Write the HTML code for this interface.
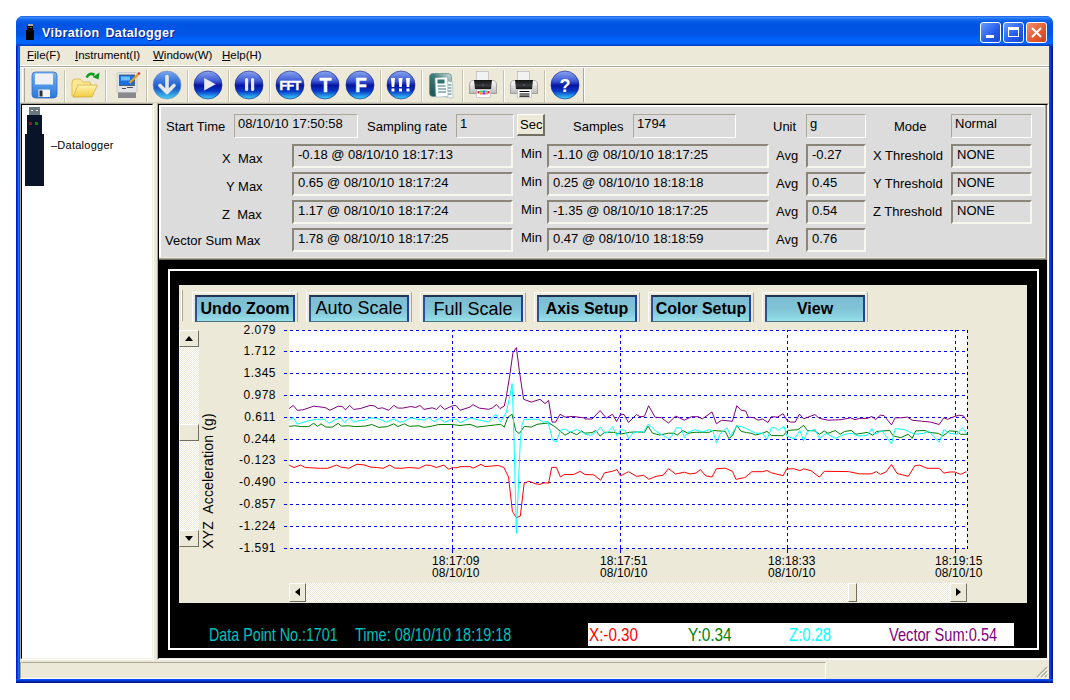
<!DOCTYPE html>
<html><head><meta charset="utf-8">
<style>
*{margin:0;padding:0;box-sizing:border-box}
html,body{width:1070px;height:700px;overflow:hidden;background:#fff}
body{position:relative;font-family:"Liberation Sans",sans-serif;color:#000}
.a{position:absolute}
.t13{font-size:13px;line-height:15px;white-space:pre}
.t12{font-size:12px;line-height:14px;white-space:pre}
.t11{font-size:12px;line-height:12px;white-space:pre;letter-spacing:0.5px}
.xl{letter-spacing:0.1px;font-size:12px;line-height:12px}
.box{position:absolute;background:#dcdcdc;border-top:2px solid #8a877a;border-left:2px solid #8a877a;border-bottom:2px solid #f8f7f0;border-right:2px solid #f8f7f0;font-size:13px;line-height:15px;padding:1px 0 0 4px;white-space:pre}
.box1{position:absolute;background:#dcdcdc;border-top:1px solid #aca899;border-left:1px solid #aca899;border-bottom:1px solid #fff;border-right:1px solid #fff;font-size:13px;line-height:15px;padding:1px 0 0 3px;white-space:pre}
.sep{position:absolute;top:70px;width:2px;height:30px;border-left:1px solid #c5c2b2;border-right:1px solid #fff}
.btn{position:absolute;height:27px;width:100px;border-top:2px solid #1e3450;border-left:2px solid #2c4f9c;border-right:2px solid #20409a;border-bottom:1px solid #4a7080;background:linear-gradient(#7cbcd2 0%,#80c4d6 50%,#8cd2e0 80%,#98e2ec 100%);font-size:16px;font-weight:bold;text-align:center;line-height:23px;white-space:pre;color:#000}
.bfr{position:absolute;height:30px;width:106px;border-top:1px solid #fff;border-left:1px solid #fff;border-right:1px solid #aca899}
</style></head><body>

<!-- window frame -->
<div class="a" style="left:16px;top:16px;width:1037px;height:667px;background:#0a4ee8;border-radius:7px 7px 0 0"></div>
<div class="a" style="left:16px;top:40px;width:1px;height:643px;background:#0020d0"></div>
<div class="a" style="left:17px;top:40px;width:1px;height:643px;background:#0838e0"></div>
<div class="a" style="left:18px;top:40px;width:1px;height:643px;background:#1a6cf0"></div>
<div class="a" style="left:19px;top:40px;width:1px;height:643px;background:#0a50e8"></div>
<div class="a" style="left:1049px;top:40px;width:1px;height:643px;background:#0a4af8"></div>
<div class="a" style="left:1050px;top:40px;width:1px;height:643px;background:#0040d8"></div>
<div class="a" style="left:1051px;top:40px;width:1px;height:643px;background:#0028b0"></div>
<div class="a" style="left:1052px;top:40px;width:1px;height:643px;background:#001490"></div>
<div class="a" style="left:16px;top:679px;width:1037px;height:1px;background:#0a4af8"></div>
<div class="a" style="left:16px;top:680px;width:1037px;height:1px;background:#0040d8"></div>
<div class="a" style="left:16px;top:681px;width:1037px;height:1px;background:#0028b0"></div>
<div class="a" style="left:16px;top:682px;width:1037px;height:1px;background:#001490"></div>
<!-- title bar -->
<div class="a" style="left:16px;top:16px;width:1037px;height:30px;border-radius:7px 7px 0 0;background:linear-gradient(#0a46d8 0px,#3d8dff 1px,#3283fb 2px,#1a6ff0 3px,#0b5fe8 5px,#0054e3 8px,#0055e5 18px,#0060f5 22px,#0066ff 27px,#005cf0 28px,#0041c6 29px)"></div>
<!-- title icon -->
<div class="a" style="left:28px;top:24px;width:5px;height:2px;background:#a8a8a8"></div>
<div class="a" style="left:27px;top:26px;width:6px;height:5px;background:#000"></div>
<div class="a" style="left:28px;top:27px;width:1px;height:1px;background:#b00000"></div>
<div class="a" style="left:30px;top:27px;width:2px;height:1px;background:#00b000"></div>
<div class="a" style="left:26px;top:30px;width:8px;height:10px;background:#000"></div>
<div class="a" style="left:42px;top:26px;font-size:12.5px;line-height:15px;font-weight:bold;color:#fff;letter-spacing:0.4px;word-spacing:2px;text-shadow:1px 1px 0 #0a1e8c;white-space:pre">Vibration Datalogger</div>
<!-- title buttons -->
<div class="a" style="left:980px;top:22px;width:21px;height:21px;border:1px solid #fff;border-radius:3px;background:linear-gradient(135deg,#6a9cff,#225aeb 60%,#1a49d0)"></div>
<div class="a" style="left:986px;top:35px;width:8px;height:3px;background:#fff"></div>
<div class="a" style="left:1003px;top:22px;width:21px;height:21px;border:1px solid #fff;border-radius:3px;background:linear-gradient(135deg,#6a9cff,#225aeb 60%,#1a49d0)"></div>
<div class="a" style="left:1008px;top:27px;width:11px;height:10px;border:1px solid #fff;border-top:3px solid #fff"></div>
<div class="a" style="left:1026px;top:22px;width:21px;height:21px;border:1px solid #fff;border-radius:3px;background:linear-gradient(135deg,#f0906a,#e35a2e 60%,#c8401c)"></div>
<svg class="a" style="left:1026px;top:22px" width="21" height="21"><path d="M6 6 L15 15 M15 6 L6 15" stroke="#fff" stroke-width="2"/></svg>

<!-- client -->
<div class="a" style="left:20px;top:46px;width:1029px;height:633px;background:#ece9d8"></div>
<!-- menu -->
<div class="a" style="left:20px;top:65px;width:1029px;height:1px;background:#fff"></div>
<div class="a" style="left:20px;top:66px;width:1029px;height:1px;background:#aca899"></div>
<div class="a" style="left:20px;top:67px;width:1029px;height:1px;background:#fff"></div>
<div class="a t12" style="left:27px;top:48px;font-size:11.5px"><u>F</u>ile(F)</div>
<div class="a t12" style="left:75px;top:48px;font-size:11.5px"><u>I</u>nstrument(I)</div>
<div class="a t12" style="left:153px;top:48px;font-size:11.5px"><u>W</u>indow(W)</div>
<div class="a t12" style="left:222px;top:48px;font-size:11.5px"><u>H</u>elp(H)</div>

<!-- toolbar -->
<div class="a" style="left:22px;top:68px;width:1px;height:34px;background:#fff"></div>
<div class="a" style="left:24px;top:68px;width:1px;height:34px;background:#aca899"></div>
<div class="a" style="left:583px;top:68px;width:1px;height:35px;background:#aca899"></div><div class="a" style="left:584px;top:68px;width:1px;height:35px;background:#fff"></div>
<div class="a" style="left:20px;top:102px;width:565px;height:1px;background:#d8d4c4"></div>
<svg class="a" style="left:0;top:0" width="600" height="104" viewBox="0 0 600 104">
<defs>
<linearGradient id="gb" x1="0" y1="0" x2="0" y2="1">
<stop offset="0" stop-color="#8aa6ee"/><stop offset="0.35" stop-color="#3f5cd6"/><stop offset="0.52" stop-color="#0614a4"/><stop offset="0.72" stop-color="#0838c8"/><stop offset="1" stop-color="#3ad6ff"/>
</linearGradient>
<linearGradient id="gd" x1="0" y1="0" x2="0" y2="1">
<stop offset="0" stop-color="#7aa8ec"/><stop offset="0.45" stop-color="#2a6ad8"/><stop offset="0.6" stop-color="#1858c8"/><stop offset="1" stop-color="#48d0f4"/>
</linearGradient>
<linearGradient id="gf" x1="0" y1="0" x2="0" y2="1">
<stop offset="0" stop-color="#74b4f4"/><stop offset="1" stop-color="#2a78d8"/>
</linearGradient>
<linearGradient id="gy" x1="0" y1="0" x2="0" y2="1">
<stop offset="0" stop-color="#fff4b0"/><stop offset="1" stop-color="#f0cc40"/>
</linearGradient>
<linearGradient id="gt" x1="0" y1="0" x2="1" y2="1">
<stop offset="0" stop-color="#a8c8c0"/><stop offset="0.5" stop-color="#2a6e6a"/><stop offset="1" stop-color="#1a4a48"/>
</linearGradient>
</defs>
<!-- separators -->
<g stroke-width="1">
<path d="M64.5 70V102 M105.5 70V102 M146.5 70V102 M187.5 70V102 M228.5 70V102 M269.5 70V102 M380.5 70V102 M421.5 70V102 M462.5 70V102 M503.5 70V102 M544.5 70V102" stroke="#c5c2b2"/>
<path d="M65.5 70V102 M106.5 70V102 M147.5 70V102 M188.5 70V102 M229.5 70V102 M270.5 70V102 M381.5 70V102 M422.5 70V102 M463.5 70V102 M504.5 70V102 M545.5 70V102" stroke="#fff"/>
</g>
<!-- floppy -->
<rect x="32" y="72" width="25" height="26" rx="3.5" fill="url(#gf)" stroke="#3a6cc0" stroke-width="0.8"/>
<rect x="35" y="73.5" width="18" height="11" fill="#eef0f4"/>
<rect x="38.5" y="89.5" width="11.5" height="7.5" fill="#f4f4f4"/>
<rect x="39.5" y="90.5" width="3" height="6" fill="#303030"/>
<!-- folder -->
<path d="M72 83 Q72 79 75 79 L80 79 L83 82 L90 82 L91 86 L72 96 Z" fill="#fbe890" stroke="#d8b040" stroke-width="0.7"/>
<path d="M73 97 L78 85 L97.5 85 L92 97 Z" fill="url(#gy)" stroke="#d0a838" stroke-width="0.7"/>
<path d="M86.5 77.5 Q89.5 72 94.5 74.8" fill="none" stroke="#109a20" stroke-width="2.6"/>
<path d="M92.5 77 L99.5 72.5 L98.5 79.5 Z" fill="#109a20"/>
<!-- computer -->
<rect x="117" y="72.5" width="20" height="20" rx="1.5" fill="#e4e4e6" stroke="#b8b8bc" stroke-width="0.6"/>
<rect x="119.5" y="75" width="15" height="10.5" fill="#1a70e0" stroke="#404c60" stroke-width="0.8"/>
<rect x="121" y="76.5" width="9" height="4" fill="#6ac0ff"/>
<rect x="118" y="92.5" width="18" height="5.5" fill="#8a8a8e"/>
<path d="M122 88.5h4 M127 87.5h6" stroke="#505050" stroke-width="1"/>
<path d="M129.5 83 L138.5 74" stroke="#e8a020" stroke-width="2.2"/>
<circle cx="139" cy="73.5" r="1.3" fill="#e03030"/>
<!-- circles -->
<circle cx="167" cy="85" r="14" fill="url(#gd)" stroke="#7a90b8" stroke-width="0.6"/>
<path d="M167 76.5 V92 M160 85.5 L167 92.5 L174 85.5" fill="none" stroke="#e6e6e6" stroke-width="3.6" stroke-linecap="round" stroke-linejoin="round"/>
<circle cx="208" cy="85" r="14" fill="url(#gb)" stroke="#14207a" stroke-width="0.6"/>
<path d="M204.2 77.9 L204.2 90.5 L215.7 84.2 Z" fill="#e8e8f0"/>
<circle cx="249" cy="85" r="14" fill="url(#gb)" stroke="#14207a" stroke-width="0.6"/>
<rect x="245" y="78" width="3.2" height="13" rx="1.6" fill="#e8e8f0"/>
<rect x="251" y="78" width="3.2" height="13" rx="1.6" fill="#e8e8f0"/>
<circle cx="290" cy="85" r="14" fill="url(#gb)" stroke="#14207a" stroke-width="0.6"/>
<text x="290" y="89.5" font-family="Liberation Sans" font-weight="bold" font-size="12.5" fill="#fff" stroke="#fff" stroke-width="0.5" text-anchor="middle" letter-spacing="-0.6">FFT</text>
<circle cx="325" cy="85" r="14" fill="url(#gb)" stroke="#14207a" stroke-width="0.6"/>
<text x="325.5" y="91.5" font-family="Liberation Sans" font-weight="bold" font-size="19.5" fill="#fff" stroke="#fff" stroke-width="0.4" text-anchor="middle">T</text>
<circle cx="360" cy="85" r="14" fill="url(#gb)" stroke="#14207a" stroke-width="0.6"/>
<text x="361" y="91.5" font-family="Liberation Sans" font-weight="bold" font-size="19.5" fill="#fff" stroke="#fff" stroke-width="0.4" text-anchor="middle">F</text>
<circle cx="401" cy="85" r="14" fill="url(#gb)" stroke="#14207a" stroke-width="0.6"/>
<g fill="#fff"><path d="M391 78h4l-0.7 9h-2.6z M398.5 78h4l-0.7 9h-2.6z M406 78h4l-0.7 9h-2.6z"/><rect x="391.5" y="88.5" width="3" height="3"/><rect x="399" y="88.5" width="3" height="3"/><rect x="406.5" y="88.5" width="3" height="3"/></g>
<circle cx="565" cy="85" r="14" fill="url(#gb)" stroke="#14207a" stroke-width="0.6"/>
<text x="565" y="91.5" font-family="Liberation Sans" font-weight="bold" font-size="18" fill="#fff" text-anchor="middle">?</text>
<!-- report -->
<linearGradient id="gr" x1="0" y1="1" x2="1" y2="0"><stop offset="0" stop-color="#164e4c"/><stop offset="0.55" stop-color="#3f7c78"/><stop offset="1" stop-color="#d4e4e2"/></linearGradient>
<rect x="429.5" y="73.5" width="22" height="23" rx="3.5" fill="url(#gr)" stroke="#6a9290" stroke-width="0.8"/>
<path d="M446 81 L452.5 82 L453 98 L446 97.5 Z" fill="#f6fafa" stroke="#9ab0b0" stroke-width="0.6"/>
<path d="M447.5 85h4 M447.5 88h4 M447.5 91h4 M447.5 94h4" stroke="#3a7a78" stroke-width="1"/>
<path d="M435 78 L447.5 77 L448 96.5 L436 97.2 Z" fill="#fff" stroke="#9ab0b0" stroke-width="0.6"/>
<rect x="437.5" y="79.5" width="7" height="4" fill="#2d7370"/>
<path d="M437.5 86h8 M438 89h8 M438 92h8" stroke="#3a7a78" stroke-width="1.1"/>
<!-- printer 1 -->
<linearGradient id="gp" x1="0" y1="0" x2="0" y2="1"><stop offset="0" stop-color="#ffffff"/><stop offset="1" stop-color="#b8b8b8"/></linearGradient>
<linearGradient id="gk" x1="0" y1="0" x2="0" y2="1"><stop offset="0" stop-color="#101010"/><stop offset="0.6" stop-color="#3a3a3a"/><stop offset="1" stop-color="#151515"/></linearGradient>
<rect x="476.5" y="71.5" width="12" height="9" fill="#f2f2f2" stroke="#b0b0b0" stroke-width="0.6"/>
<path d="M469.5 85 Q469.5 80.5 473.5 80.5 L492.5 80.5 Q496.5 80.5 496.5 85 L496.5 93.5 L469.5 93.5 Z" fill="url(#gp)" stroke="#8a8a8a" stroke-width="0.7"/>
<path d="M474 80 L492 80 L491 89 L475 89 Z" fill="url(#gk)"/>
<circle cx="483" cy="85" r="0.7" fill="#5080ff"/>
<rect x="476.5" y="89.5" width="14" height="8" fill="#fff" stroke="#a8a8a8" stroke-width="0.5"/>
<rect x="477.5" y="91" width="2" height="2.5" fill="#ff1060"/><rect x="480" y="90.5" width="2.5" height="2" fill="#40e020"/><rect x="480" y="92.5" width="2.5" height="2" fill="#ff9000"/><rect x="482.5" y="90.5" width="2.5" height="2" fill="#2080ff"/><rect x="482.5" y="92.5" width="2.5" height="2" fill="#a020ff"/><rect x="485" y="90.5" width="2.5" height="2" fill="#40e020"/><rect x="485" y="92.5" width="2.5" height="2" fill="#ff9000"/><rect x="487.5" y="91" width="2" height="2.5" fill="#ff1060"/>
<!-- printer 2 -->
<rect x="517.5" y="71.5" width="12" height="9" fill="#f2f2f2" stroke="#b0b0b0" stroke-width="0.6"/>
<path d="M510.5 85 Q510.5 80.5 514.5 80.5 L533.5 80.5 Q537.5 80.5 537.5 85 L537.5 93.5 L510.5 93.5 Z" fill="url(#gp)" stroke="#8a8a8a" stroke-width="0.7"/>
<path d="M515 80 L533 80 L532 89 L516 89 Z" fill="url(#gk)"/>
<circle cx="524" cy="85" r="0.7" fill="#5080ff"/>
<rect x="517.5" y="89.5" width="14" height="8" fill="#fff" stroke="#a8a8a8" stroke-width="0.5"/>
<path d="M519.5 91.5h10 M519.5 94h10 M519.5 96.2h10" stroke="#000" stroke-width="1.2"/>
</svg>


<!-- tree panel -->
<div class="a" style="left:20px;top:103px;width:134px;height:557px;background:#fff;border-top:1px solid #aca899;border-left:1px solid #aca899;border-right:1px solid #fff;border-bottom:1px solid #fff"></div>
<div class="a" style="left:21px;top:104px;width:132px;height:555px;border-top:1px solid #000;border-left:1px solid #000;border-right:1px solid #f1efe2;border-bottom:1px solid #f1efe2"></div>
<!-- usb icon -->
<div class="a" style="left:29px;top:107px;width:11px;height:8px;background:#6c7880"></div>
<div class="a" style="left:31px;top:110px;width:2px;height:1px;background:#e8e8e8"></div>
<div class="a" style="left:36px;top:110px;width:2px;height:1px;background:#e8e8e8"></div>
<div class="a" style="left:27px;top:115px;width:15px;height:20px;background:#0a1428"></div>
<div class="a" style="left:29px;top:122px;width:3px;height:3px;background:#a01010"></div>
<div class="a" style="left:35px;top:122px;width:3px;height:3px;background:#108010"></div>
<div class="a" style="left:25px;top:134px;width:19px;height:52px;background:#0a1428"></div>
<div class="a t12" style="left:51px;top:138px;font-size:11px;letter-spacing:0.25px">–Datalogger</div>

<!-- info panel -->
<div class="a" style="left:157px;top:103px;width:892px;height:557px;border-top:1px solid #aca899;border-left:1px solid #aca899;border-right:1px solid #fff;border-bottom:1px solid #fff"></div>
<div class="a" style="left:158px;top:104px;width:890px;height:555px;border-top:1px solid #000;border-left:1px solid #000;border-right:1px solid #f1efe2;border-bottom:1px solid #f1efe2;background:#000"></div>
<div class="a" style="left:159px;top:105px;width:888px;height:155px;background:#716f64"></div>
<div class="a" style="left:159px;top:105px;width:887px;height:154px;background:#aca899"></div>
<div class="a" style="left:159px;top:105px;width:886px;height:153px;background:#ece9d8"></div>
<div class="a" style="left:159px;top:105px;width:885px;height:152px;background:#fff"></div>
<div class="a" style="left:161px;top:107px;width:883px;height:150px;background:#dcdcdc"></div>
<!--INFO-->
<div class="a t13" style="left:166px;top:119px">Start Time</div>
<div class="box1" style="left:234px;top:114px;width:124px;height:24px">08/10/10 17:50:58</div>
<div class="a t13" style="left:367px;top:119px">Sampling rate</div>
<div class="box1" style="left:456px;top:114px;width:58px;height:24px">1</div>
<div class="a" style="left:517px;top:114px;width:28px;height:22px;background:#ece9d8;border-top:1px solid #fff;border-left:1px solid #fff;border-right:2px solid #716f64;border-bottom:2px solid #716f64;font-size:13px;line-height:19px;padding-left:2px">Sec</div>
<div class="a t13" style="left:573px;top:119px">Samples</div>
<div class="box1" style="left:633px;top:114px;width:103px;height:24px">1794</div>
<div class="a t13" style="left:773px;top:119px">Unit</div>
<div class="box1" style="left:806px;top:114px;width:60px;height:24px">g</div>
<div class="a t13" style="left:894px;top:119px">Mode</div>
<div class="box1" style="left:951px;top:114px;width:81px;height:24px">Normal</div>

<div class="a t13" style="left:222px;top:151px">X  Max</div>
<div class="a t13" style="left:226px;top:179px">Y Max</div>
<div class="a t13" style="left:222px;top:207px">Z  Max</div>
<div class="a t13" style="left:165px;top:233px">Vector Sum Max</div>
<div class="box" style="left:292px;top:144px;width:221px;height:24px">-0.18 @ 08/10/10 18:17:13</div>
<div class="box" style="left:292px;top:172px;width:221px;height:24px">0.65 @ 08/10/10 18:17:24</div>
<div class="box" style="left:292px;top:200px;width:221px;height:24px">1.17 @ 08/10/10 18:17:24</div>
<div class="box" style="left:292px;top:228px;width:221px;height:24px">1.78 @ 08/10/10 18:17:25</div>
<div class="a t13" style="left:521px;top:146px">Min</div>
<div class="a t13" style="left:521px;top:174px">Min</div>
<div class="a t13" style="left:521px;top:202px">Min</div>
<div class="a t13" style="left:521px;top:230px">Min</div>
<div class="box" style="left:547px;top:144px;width:222px;height:24px">-1.10 @ 08/10/10 18:17:25</div>
<div class="box" style="left:547px;top:172px;width:222px;height:24px">0.25 @ 08/10/10 18:18:18</div>
<div class="box" style="left:547px;top:200px;width:222px;height:24px">-1.35 @ 08/10/10 18:17:25</div>
<div class="box" style="left:547px;top:228px;width:222px;height:24px">0.47 @ 08/10/10 18:18:59</div>
<div class="a t13" style="left:776px;top:148px">Avg</div>
<div class="a t13" style="left:776px;top:176px">Avg</div>
<div class="a t13" style="left:776px;top:204px">Avg</div>
<div class="a t13" style="left:776px;top:232px">Avg</div>
<div class="box" style="left:806px;top:144px;width:60px;height:24px">-0.27</div>
<div class="box" style="left:806px;top:172px;width:60px;height:24px">0.45</div>
<div class="box" style="left:806px;top:200px;width:60px;height:24px">0.54</div>
<div class="box" style="left:806px;top:228px;width:60px;height:24px">0.76</div>
<div class="a t13" style="left:873px;top:148px">X Threshold</div>
<div class="a t13" style="left:873px;top:176px">Y Threshold</div>
<div class="a t13" style="left:873px;top:204px">Z Threshold</div>
<div class="box" style="left:951px;top:144px;width:81px;height:24px">NONE</div>
<div class="box" style="left:951px;top:172px;width:81px;height:24px">NONE</div>
<div class="box" style="left:951px;top:200px;width:81px;height:24px">NONE</div>

<!-- chart black area -->
<div class="a" style="left:168px;top:269px;width:871px;height:381px;border:2px solid #fff"></div>
<!-- plot panel cream -->
<div class="a" style="left:179px;top:285px;width:848px;height:318px;background:#ece9d8"></div>
<div class="a" style="left:181px;top:290px;width:1px;height:31px;background:#fff"></div>
<div class="a" style="left:182px;top:290px;width:1px;height:31px;background:#aca899"></div>
<!--BUTTONS-->
<div class="bfr" style="left:192px;top:292px"></div>
<div class="btn" style="left:195px;top:295px">Undo Zoom</div>
<div class="bfr" style="left:306px;top:292px"></div>
<div class="btn" style="left:309px;top:295px;font-weight:normal;font-size:18px">Auto Scale</div>
<div class="bfr" style="left:420px;top:292px"></div>
<div class="btn" style="left:423px;top:295px;font-weight:normal;font-size:18px;line-height:25px">Full Scale</div>
<div class="bfr" style="left:534px;top:292px"></div>
<div class="btn" style="left:537px;top:295px">Axis Setup</div>
<div class="bfr" style="left:648px;top:292px"></div>
<div class="btn" style="left:651px;top:295px">Color Setup</div>
<div class="bfr" style="left:762px;top:292px"></div>
<div class="btn" style="left:765px;top:295px">View</div>

<!-- vertical scrollbar -->
<div class="a" style="left:179px;top:330px;width:20px;height:217px;background:repeating-conic-gradient(#fff 0 25%,#ece9d8 0 50%) 0 0/2px 2px"></div>
<div class="a" style="left:179px;top:330px;width:20px;height:17px;background:#ece9d8;border-top:1px solid #fff;border-left:1px solid #fff;border-right:1px solid #716f64;border-bottom:1px solid #716f64"></div>
<svg class="a" style="left:179px;top:330px" width="20" height="17"><path d="M6 11 L14 11 L10 6 Z" fill="#000"/></svg>
<div class="a" style="left:179px;top:424px;width:20px;height:17px;background:#ece9d8;border-top:1px solid #fff;border-left:1px solid #fff;border-right:1px solid #716f64;border-bottom:1px solid #716f64"></div>
<div class="a" style="left:179px;top:530px;width:20px;height:17px;background:#ece9d8;border-top:1px solid #fff;border-left:1px solid #fff;border-right:1px solid #716f64;border-bottom:1px solid #716f64"></div>
<svg class="a" style="left:179px;top:530px" width="20" height="17"><path d="M6 6 L14 6 L10 11 Z" fill="#000"/></svg>
<div class="a" style="left:138px;top:473px;width:140px;height:16px;font-size:14px;line-height:16px;letter-spacing:0.15px;white-space:pre;text-align:center;transform:rotate(-90deg);transform-origin:center">XYZ  Acceleration (g)</div>
<div class="a t11" style="right:794px;top:323.5px">2.079</div><div class="a t11" style="right:794px;top:345.3px">1.712</div><div class="a t11" style="right:794px;top:367.1px">1.345</div><div class="a t11" style="right:794px;top:388.9px">0.978</div><div class="a t11" style="right:794px;top:410.7px">0.611</div><div class="a t11" style="right:794px;top:432.5px">0.244</div><div class="a t11" style="right:794px;top:454.3px">-0.123</div><div class="a t11" style="right:794px;top:476.1px">-0.490</div><div class="a t11" style="right:794px;top:497.9px">-0.857</div><div class="a t11" style="right:794px;top:519.7px">-1.224</div><div class="a t11" style="right:794px;top:541.5px">-1.591</div>
<svg class="a" style="left:0;top:0" width="1070" height="700" viewBox="0 0 1070 700">
<rect x="289" y="330" width="678" height="219" fill="#fff"/>
<line x1="284" y1="330.5" x2="967" y2="330.5" stroke="#0000ff" stroke-width="1" stroke-dasharray="3 3"/><line x1="284" y1="351.5" x2="967" y2="351.5" stroke="#0000ff" stroke-width="1" stroke-dasharray="3 3"/><line x1="284" y1="373.5" x2="967" y2="373.5" stroke="#0000ff" stroke-width="1" stroke-dasharray="3 3"/><line x1="284" y1="395.5" x2="967" y2="395.5" stroke="#0000ff" stroke-width="1" stroke-dasharray="3 3"/><line x1="284" y1="417.5" x2="967" y2="417.5" stroke="#0000ff" stroke-width="1" stroke-dasharray="3 3"/><line x1="284" y1="439.5" x2="967" y2="439.5" stroke="#0000ff" stroke-width="1" stroke-dasharray="3 3"/><line x1="284" y1="460.5" x2="967" y2="460.5" stroke="#0000ff" stroke-width="1" stroke-dasharray="3 3"/><line x1="284" y1="482.5" x2="967" y2="482.5" stroke="#0000ff" stroke-width="1" stroke-dasharray="3 3"/><line x1="284" y1="504.5" x2="967" y2="504.5" stroke="#0000ff" stroke-width="1" stroke-dasharray="3 3"/><line x1="284" y1="526.5" x2="967" y2="526.5" stroke="#0000ff" stroke-width="1" stroke-dasharray="3 3"/><line x1="284" y1="548.5" x2="967" y2="548.5" stroke="#0000ff" stroke-width="1" stroke-dasharray="3 3"/><line x1="452.5" y1="542" x2="452.5" y2="330" stroke="#0000ff" stroke-width="1" stroke-dasharray="3 3"/><line x1="452.5" y1="545" x2="452.5" y2="553" stroke="#0000ff" stroke-width="1"/><line x1="620.5" y1="542" x2="620.5" y2="330" stroke="#0000ff" stroke-width="1" stroke-dasharray="3 3"/><line x1="620.5" y1="545" x2="620.5" y2="553" stroke="#0000ff" stroke-width="1"/><line x1="787.5" y1="542" x2="787.5" y2="330" stroke="#0000ff" stroke-width="1" stroke-dasharray="3 3"/><line x1="787.5" y1="545" x2="787.5" y2="553" stroke="#0000ff" stroke-width="1"/><line x1="955.5" y1="542" x2="955.5" y2="330" stroke="#0000ff" stroke-width="1" stroke-dasharray="3 3"/><line x1="955.5" y1="545" x2="955.5" y2="553" stroke="#0000ff" stroke-width="1"/><line x1="967.5" y1="330" x2="967.5" y2="549" stroke="#000" stroke-width="1" stroke-dasharray="3 3"/>
<polyline points="289.1,465.1 294.0,467.5 300.5,465.1 305.4,467.5 320.2,468.3 327.5,468.3 336.5,465.1 340.6,467.0 348.8,468.3 357.0,464.2 365.1,465.1 370.1,467.0 376.6,467.5 383.1,468.3 389.7,465.1 394.6,468.0 401.1,468.3 409.3,467.5 419.1,468.3 425.7,465.1 430.6,465.4 436.3,467.5 443.7,465.1 448.6,469.1 453.5,467.5 455.9,468.0 460.0,466.7 470.0,466.6 473.1,468.2 481.0,464.3 484.9,466.6 498.3,465.5 503.8,467.4 508.5,476.9 512.4,511.4 516.4,517.7 520.3,516.1 524.2,483.1 528.9,481.3 536.0,483.9 539.9,484.4 543.9,482.8 548.6,483.1 551.7,467.4 556.4,467.4 560.4,476.9 564.3,474.5 573.7,474.5 580.0,471.4 585.0,474.5 593.9,474.9 600.6,480.2 604.5,472.8 612.5,471.3 617.0,469.6 620.5,475.8 628.5,471.7 636.5,476.3 643.6,475.3 648.9,479.3 656.0,476.3 663.1,475.3 668.5,468.7 675.6,474.0 684.4,472.2 689.8,474.0 696.0,473.1 700.4,469.6 705.7,475.8 712.0,477.0 716.4,468.7 725.3,468.2 732.4,471.3 735.9,479.3 744.8,477.6 751.9,471.7 762.6,471.7 767.0,470.5 771.4,472.8 783.1,475.7 786.8,468.8 794.3,468.8 799.9,470.7 803.6,468.8 811.1,470.7 819.5,477.2 824.2,471.3 848.5,471.6 859.7,473.9 870.9,473.9 876.5,471.6 880.3,474.4 885.9,472.0 891.5,464.5 897.1,473.5 908.3,476.3 914.9,465.7 919.5,465.1 927.0,468.3 939.2,468.3 943.8,473.1 949.4,472.0 955.0,472.0 960.7,474.4 966.3,471.6" fill="none" stroke="#ff0000" stroke-width="1" stroke-linejoin="miter"/>
<polyline points="289.1,426.3 294.8,425.8 301.4,426.6 308.7,426.6 313.6,423.3 317.7,426.3 321.0,423.8 325.9,427.1 332.4,427.1 338.2,423.3 341.4,426.1 348.8,425.8 355.3,426.6 365.1,426.1 371.7,424.5 379.0,427.4 387.2,426.6 393.8,423.8 397.9,426.6 404.4,423.8 409.3,426.3 419.1,425.8 424.0,427.4 432.2,426.1 438.7,424.5 451.8,424.5 460.0,425.5 470.0,424.3 477.1,427.1 494.3,425.0 500.7,424.3 504.3,427.1 507.9,417.1 512.1,414.3 515.7,430.7 519.3,433.6 524.3,426.4 531.4,427.1 537.1,424.3 548.6,422.9 554.9,426.6 560.4,431.3 565.0,435.2 570.6,432.0 576.8,434.7 581.6,431.0 585.0,433.2 592.1,432.6 595.7,430.5 600.1,436.2 604.5,432.3 613.4,432.3 620.5,434.1 629.4,432.3 636.5,431.9 644.5,432.3 648.0,426.1 652.5,433.2 659.6,435.0 668.5,433.2 673.8,433.2 677.3,435.0 682.7,430.5 688.0,433.2 695.1,432.3 702.2,432.3 709.3,432.3 712.8,430.5 725.3,431.4 728.8,438.5 732.4,435.8 736.8,425.5 741.2,431.4 746.6,432.6 751.0,433.2 755.5,435.0 762.6,433.2 767.0,431.4 771.4,435.5 783.1,435.7 787.8,430.5 798.0,429.6 803.6,425.3 807.4,430.5 814.9,430.9 819.5,434.3 824.2,430.9 827.9,433.3 835.4,430.5 840.1,434.3 844.8,431.4 851.3,430.5 856.0,434.3 867.2,432.4 872.8,435.2 876.5,431.4 889.6,430.5 893.4,436.1 900.8,437.6 908.3,434.3 912.1,438.4 915.8,430.9 925.1,430.5 928.9,432.4 938.2,433.3 942.9,436.1 949.4,430.9 956.9,431.4 960.7,434.3 967.0,434.3" fill="none" stroke="#008000" stroke-width="1" stroke-linejoin="miter"/>
<polyline points="289.1,420.1 293.2,417.6 297.3,424.2 307.9,420.9 316.1,419.3 324.3,419.3 329.2,423.3 334.1,420.1 340.6,417.9 344.7,422.5 349.6,417.6 353.7,422.2 358.6,420.6 365.1,420.1 370.1,417.9 376.6,418.4 381.5,420.1 386.4,422.2 393.8,418.9 399.5,422.2 402.8,421.7 410.9,417.9 417.5,419.3 424.0,420.1 428.9,417.6 433.8,421.7 439.6,418.4 444.5,422.2 451.8,419.3 456.7,419.3 460.0,422.9 470.0,417.9 475.7,419.3 488.6,422.1 495.7,414.3 500.7,422.1 506.4,412.1 510.0,395.0 512.1,383.6 513.5,420.0 516.4,533.4 520.3,440.7 522.0,425.0 524.3,419.3 538.6,419.3 542.9,422.1 547.9,421.4 552.5,440.0 556.4,442.0 560.4,430.5 564.3,429.0 570.6,432.0 576.8,429.4 583.1,432.9 585.0,434.1 590.3,435.5 595.7,432.3 600.6,427.0 604.5,433.2 608.1,432.3 612.5,426.6 617.0,435.8 620.5,429.6 625.0,430.5 628.5,438.5 632.9,433.2 638.3,431.4 643.6,432.3 648.0,424.3 652.5,427.8 656.0,431.4 663.1,435.5 668.5,438.5 672.0,435.8 676.4,427.8 680.9,427.8 684.4,437.6 688.0,432.3 695.1,429.6 702.2,431.9 709.3,429.6 712.8,430.5 716.4,442.9 719.9,434.1 727.0,427.8 730.6,435.8 736.8,426.1 741.2,426.6 746.6,428.7 755.5,433.2 762.6,433.2 767.0,439.4 771.4,427.8 774.7,427.7 778.4,430.1 784.0,426.4 786.8,436.1 794.3,438.9 799.9,430.5 803.6,440.8 807.4,431.4 814.9,429.6 819.5,438.4 826.1,433.3 835.4,438.4 844.8,434.3 852.2,433.3 857.9,436.1 867.2,435.2 871.9,428.6 874.7,434.3 882.1,430.5 891.5,444.0 895.2,428.6 904.6,429.6 910.2,432.4 915.8,434.3 923.3,433.3 928.9,431.4 934.5,437.1 939.2,442.1 943.8,429.6 949.4,433.3 956.9,434.3 962.5,427.7 967.0,433.9" fill="none" stroke="#00ffff" stroke-width="1" stroke-linejoin="miter"/>
<polyline points="289.1,408.6 293.2,405.4 297.3,410.3 303.0,409.8 313.6,406.2 325.1,407.5 330.0,410.3 338.2,406.2 342.2,406.5 345.5,409.8 349.6,405.4 353.7,409.4 360.2,408.6 370.1,405.4 374.1,405.8 378.2,408.6 382.3,407.8 388.9,410.3 393.8,405.4 397.9,408.1 402.8,408.1 410.9,406.5 415.8,407.5 419.9,405.4 424.0,409.4 432.2,407.8 436.3,409.4 440.4,405.4 444.5,409.4 452.6,405.8 455.9,405.4 460.0,410.3 470.0,407.1 472.9,404.7 479.3,408.1 488.6,409.3 492.1,408.1 496.4,404.6 500.0,408.6 504.3,406.0 506.4,396.4 510.0,373.6 512.9,352.9 516.4,347.6 519.3,370.7 523.6,399.3 531.4,402.1 540.0,399.3 545.0,403.6 548.6,400.4 552.1,422.1 555.7,422.1 560.0,414.3 565.0,417.1 572.9,416.4 584.3,417.9 585.0,419.0 592.1,419.0 600.1,410.6 606.3,418.1 612.5,414.2 616.6,421.6 620.5,414.2 624.1,414.5 628.5,422.5 636.5,414.5 640.0,416.7 644.5,416.3 648.6,405.7 655.1,417.2 661.3,417.7 668.5,423.1 675.6,416.0 684.4,420.2 691.5,416.7 698.6,416.7 702.2,419.0 712.0,411.9 716.4,423.8 721.7,420.2 732.4,421.3 736.8,405.7 740.9,410.1 745.7,411.0 748.4,417.2 753.7,417.7 758.1,420.2 762.6,419.0 767.9,422.5 771.4,416.7 777.5,417.1 783.1,413.7 786.8,420.2 790.6,422.1 795.2,422.1 799.5,414.1 803.6,418.9 807.4,417.4 814.9,414.6 819.5,418.4 827.9,420.2 841.0,419.7 850.4,417.8 855.0,419.7 859.7,418.4 867.2,418.4 871.9,416.5 875.6,419.7 880.3,415.2 884.0,415.6 891.5,424.9 895.2,417.8 900.8,417.8 907.4,417.1 912.1,420.2 921.4,421.2 930.7,422.1 939.2,424.5 943.8,417.8 947.6,419.3 952.2,417.4 958.8,415.2 963.5,415.9 967.0,420.8" fill="none" stroke="#800080" stroke-width="1" stroke-linejoin="miter"/>
</svg>
<div class="a t11 xl" style="left:432px;top:555px">18:17:09<br>08/10/10</div><div class="a t11 xl" style="left:600px;top:555px">18:17:51<br>08/10/10</div><div class="a t11 xl" style="left:768px;top:555px">18:18:33<br>08/10/10</div><div class="a t11 xl" style="left:935px;top:555px">18:19:15<br>08/10/10</div>
<!-- horizontal scrollbar -->
<div class="a" style="left:289px;top:583px;width:678px;height:19px;background:repeating-conic-gradient(#fff 0 25%,#ece9d8 0 50%) 0 0/2px 2px"></div>
<div class="a" style="left:289px;top:583px;width:17px;height:19px;background:#ece9d8;border-top:1px solid #fff;border-left:1px solid #fff;border-right:1px solid #716f64;border-bottom:1px solid #716f64"></div>
<svg class="a" style="left:289px;top:583px" width="17" height="19"><path d="M11 5 L11 13 L6 9 Z" fill="#000"/></svg>
<div class="a" style="left:848px;top:583px;width:9px;height:19px;background:#ece9d8;border-top:1px solid #fff;border-left:1px solid #fff;border-right:1px solid #716f64;border-bottom:1px solid #716f64"></div>
<div class="a" style="left:950px;top:583px;width:17px;height:19px;background:#ece9d8;border-top:1px solid #fff;border-left:1px solid #fff;border-right:1px solid #716f64;border-bottom:1px solid #716f64"></div>
<svg class="a" style="left:950px;top:583px" width="17" height="19"><path d="M6 5 L6 13 L11 9 Z" fill="#000"/></svg>

<!-- bottom data row -->
<div class="a" style="left:209px;top:625px;font-size:19px;line-height:20px;color:#00c0c0;white-space:pre;transform:scaleX(0.752);transform-origin:left top">Data Point No.:1701</div>
<div class="a" style="left:355px;top:625px;font-size:19px;line-height:20px;color:#00c0c0;white-space:pre;transform:scaleX(0.762);transform-origin:left top">Time: 08/10/10 18:19:18</div>
<div class="a" style="left:588px;top:623px;width:426px;height:23px;background:#fff"></div>
<div class="a" style="left:589px;top:625px;font-size:19px;line-height:20px;color:#ff0000;white-space:pre;transform:scaleX(0.8);transform-origin:left top">X:-0.30</div>
<div class="a" style="left:688px;top:625px;font-size:19px;line-height:20px;color:#008000;white-space:pre;transform:scaleX(0.81);transform-origin:left top">Y:0.34</div>
<div class="a" style="left:789px;top:625px;font-size:19px;line-height:20px;color:#00ffff;white-space:pre;transform:scaleX(0.78);transform-origin:left top">Z:0.28</div>
<div class="a" style="left:889px;top:625px;font-size:19px;line-height:20px;color:#800080;white-space:pre;transform:scaleX(0.77);transform-origin:left top">Vector Sum:0.54</div>

<!-- status bar -->
<div class="a" style="left:20px;top:662px;width:806px;height:17px;border-top:1px solid #aca899;border-left:1px solid #aca899;border-right:1px solid #fff;border-bottom:1px solid #fff"></div>
<svg class="a" style="left:1035px;top:665px" width="14" height="14"><path d="M12 2 L2 12 M12 6 L6 12 M12 10 L10 12" stroke="#aca899" stroke-width="1.2"/><path d="M13 3 L3 13 M13 7 L7 13 M13 11 L11 13" stroke="#fff" stroke-width="1"/></svg>

</body></html>
